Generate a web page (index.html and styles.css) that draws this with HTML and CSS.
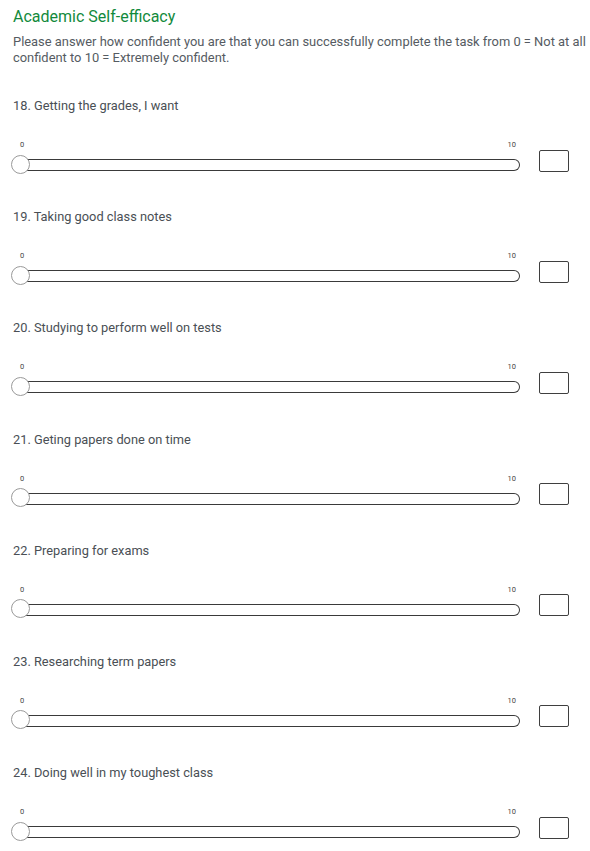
FILE: index.html
```html
<!DOCTYPE html>
<html>
<head>
<meta charset="utf-8">
<link rel="stylesheet" href="styles.css">
</head>
<body>
<div class="page">
  <h1 class="title">Academic Self-efficacy</h1>
  <p class="desc">Please answer how confident you are that you can successfully complete the task from 0 = Not at all confident to 10 = Extremely confident.</p>

  <div class="q">
    <div class="q-text">18. Getting the grades, I want</div>
    <div class="slider-row">
      <div class="slider">
        <div class="labels"><span>0</span><span>10</span></div>
        <div class="track"><div class="knob"></div></div>
      </div>
      <div class="box"></div>
    </div>
  </div>

  <div class="q">
    <div class="q-text">19. Taking good class notes</div>
    <div class="slider-row">
      <div class="slider">
        <div class="labels"><span>0</span><span>10</span></div>
        <div class="track"><div class="knob"></div></div>
      </div>
      <div class="box"></div>
    </div>
  </div>

  <div class="q">
    <div class="q-text">20. Studying to perform well on tests</div>
    <div class="slider-row">
      <div class="slider">
        <div class="labels"><span>0</span><span>10</span></div>
        <div class="track"><div class="knob"></div></div>
      </div>
      <div class="box"></div>
    </div>
  </div>

  <div class="q">
    <div class="q-text">21. Geting papers done on time</div>
    <div class="slider-row">
      <div class="slider">
        <div class="labels"><span>0</span><span>10</span></div>
        <div class="track"><div class="knob"></div></div>
      </div>
      <div class="box"></div>
    </div>
  </div>

  <div class="q">
    <div class="q-text">22. Preparing for exams</div>
    <div class="slider-row">
      <div class="slider">
        <div class="labels"><span>0</span><span>10</span></div>
        <div class="track"><div class="knob"></div></div>
      </div>
      <div class="box"></div>
    </div>
  </div>

  <div class="q">
    <div class="q-text">23. Researching term papers</div>
    <div class="slider-row">
      <div class="slider">
        <div class="labels"><span>0</span><span>10</span></div>
        <div class="track"><div class="knob"></div></div>
      </div>
      <div class="box"></div>
    </div>
  </div>

  <div class="q">
    <div class="q-text">24. Doing well in my toughest class</div>
    <div class="slider-row">
      <div class="slider">
        <div class="labels"><span>0</span><span>10</span></div>
        <div class="track"><div class="knob"></div></div>
      </div>
      <div class="box"></div>
    </div>
  </div>
</div>
</body>
</html>
```

FILE: styles.css
```css
html, body {
  margin: 0;
  padding: 0;
  background: #ffffff;
}

.page {
  padding: 7px 0 0 13px;
  font-family: Roboto, "Noto Sans", Arial, sans-serif;
  color: #333e48;
}

.title {
  margin: 0;
  font-size: 16px;
  line-height: 20px;
  font-weight: 400;
  color: #128a3c;
}

.desc {
  margin: 7px -6px 0 0;
  font-size: 12.9px;
  line-height: 16px;
  color: #555b62;
}

.q {
  height: 111.2px;
}

.q:first-of-type {
  margin-top: 32px;
}

.q-text {
  font-size: 12.8px;
  line-height: 16px;
  color: #4a4f55;
}

.slider-row {
  display: flex;
  align-items: flex-end;
  margin-top: 26px;
}

.slider {
  width: 509px;
  margin-left: -2px;
}

.labels {
  display: flex;
  justify-content: space-between;
  font-size: 7.5px;
  line-height: 10px;
  color: #444;
  padding: 0 4px 0 9px;
}

.track {
  position: relative;
  margin-top: 9px;
  height: 10px;
  border: 1.5px solid #3a3a3a;
  border-left: none;
  border-radius: 0 6px 6px 0;
  margin-left: 8px;
}

.knob {
  position: absolute;
  left: -8px;
  top: -5.5px;
  width: 17px;
  height: 17px;
  border: 1.5px solid #9a9a9a;
  border-radius: 50%;
  background: #fff;
}

.box {
  width: 28px;
  height: 20px;
  border: 1.5px solid #3f3f3f;
  border-radius: 2px;
  margin-left: 19px;
  margin-bottom: -0.5px;
}
```
